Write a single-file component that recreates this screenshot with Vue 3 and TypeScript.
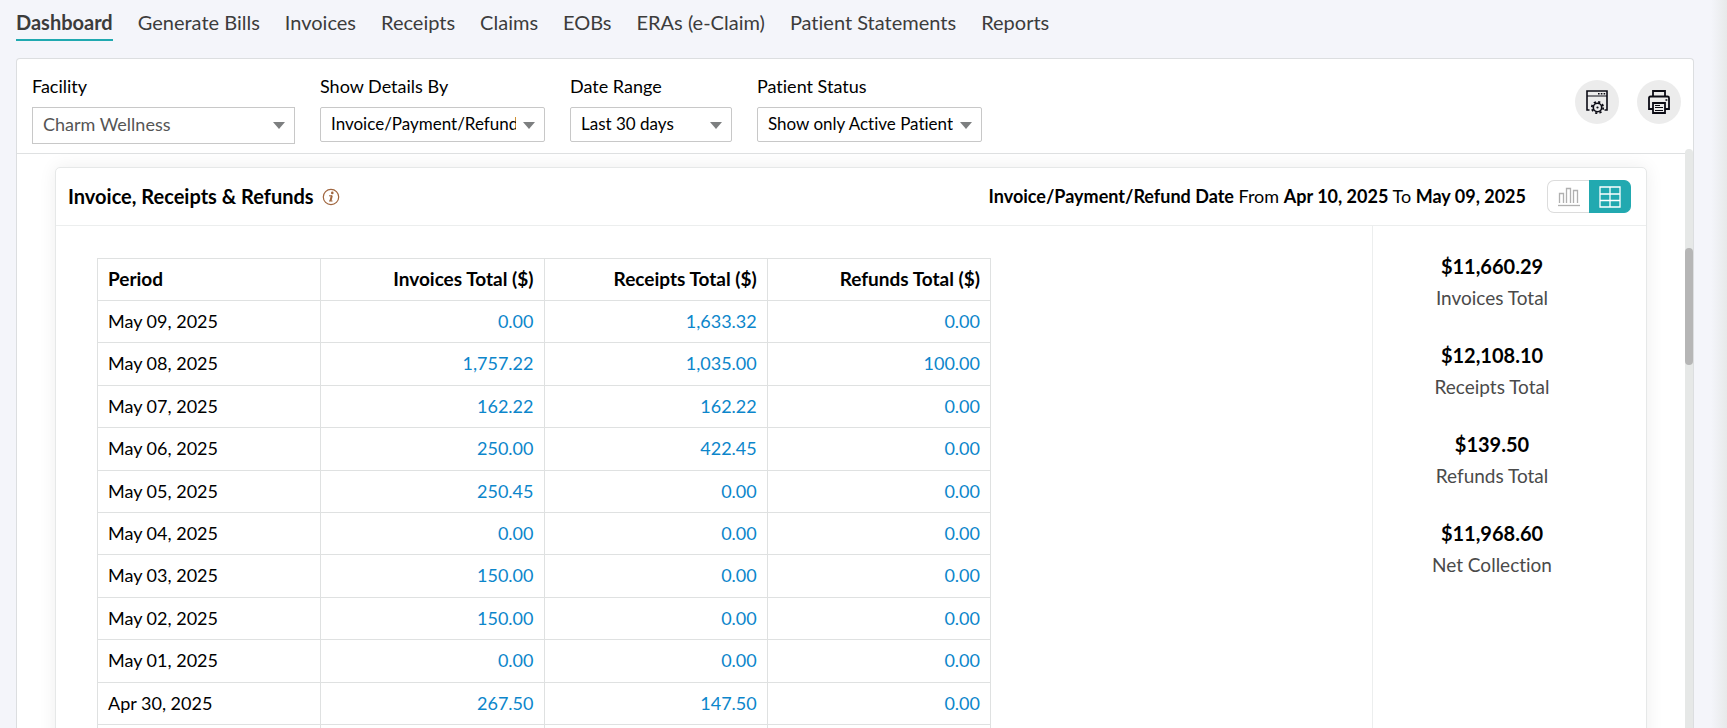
<script setup lang="ts">
import { ref } from 'vue'

interface Filter {
  id: string
  label: string
  options: string[]
  size: string
}

interface Row {
  period: string
  invoices: string
  receipts: string
  refunds: string
}

const tabs = [
  'Dashboard', 'Generate Bills', 'Invoices', 'Receipts', 'Claims',
  'EOBs', 'ERAs (e-Claim)', 'Patient Statements', 'Reports',
]
const activeTab = ref('Dashboard')

const filters: Filter[] = [
  { id: 'facility', label: 'Facility', options: ['Charm Wellness'], size: 'large' },
  { id: 'details', label: 'Show Details By', options: ['Invoice/Payment/Refund Date'], size: 'medium' },
  { id: 'range', label: 'Date Range', options: ['Last 30 days'], size: 'small' },
  { id: 'status', label: 'Patient Status', options: ['Show only Active Patients'], size: 'medium' },
]

const rows: Row[] = [
  { period: 'May 09, 2025', invoices: '0.00', receipts: '1,633.32', refunds: '0.00' },
  { period: 'May 08, 2025', invoices: '1,757.22', receipts: '1,035.00', refunds: '100.00' },
  { period: 'May 07, 2025', invoices: '162.22', receipts: '162.22', refunds: '0.00' },
  { period: 'May 06, 2025', invoices: '250.00', receipts: '422.45', refunds: '0.00' },
  { period: 'May 05, 2025', invoices: '250.45', receipts: '0.00', refunds: '0.00' },
  { period: 'May 04, 2025', invoices: '0.00', receipts: '0.00', refunds: '0.00' },
  { period: 'May 03, 2025', invoices: '150.00', receipts: '0.00', refunds: '0.00' },
  { period: 'May 02, 2025', invoices: '150.00', receipts: '0.00', refunds: '0.00' },
  { period: 'May 01, 2025', invoices: '0.00', receipts: '0.00', refunds: '0.00' },
  { period: 'Apr 30, 2025', invoices: '267.50', receipts: '147.50', refunds: '0.00' },
]

const totals = [
  { amount: '$11,660.29', label: 'Invoices Total' },
  { amount: '$12,108.10', label: 'Receipts Total' },
  { amount: '$139.50', label: 'Refunds Total' },
  { amount: '$11,968.60', label: 'Net Collection' },
]

const view = ref<'chart' | 'table'>('table')
</script>

<template>
  <div class="page">
    <nav class="tabs">
      <a
        v-for="tab in tabs"
        :key="tab"
        href="#"
        class="tab"
        :class="{ active: tab === activeTab }"
        @click.prevent="activeTab = tab"
      >{{ tab }}</a>
    </nav>

    <main class="panel">
      <header class="toolbar">
        <div v-for="f in filters" :key="f.id" class="field" :class="f.size">
          <label :for="f.id">{{ f.label }}</label>
          <div class="select-wrap">
            <select :id="f.id">
              <option v-for="o in f.options" :key="o">{{ o }}</option>
            </select>
            <svg class="caret" viewBox="0 0 12 7" aria-hidden="true"><path d="M0 0h12L6 7z" fill="#7d7f80" /></svg>
          </div>
        </div>
        <div class="actions">
          <button type="button" class="round" aria-label="Dashboard settings">
            <svg width="22" height="24" viewBox="0 0 22 24" fill="none" stroke="#0b0b14">
              <path d="M3.500 20H1V1h20v19h-2.500" stroke-width="1.600" />
              <path d="M1 6h20" stroke-width="1" />
              <path d="M12 3.800h1.600M14.800 3.800h1.600M17.600 3.800h1.600" stroke-width="1.600" />
              <circle cx="11.500" cy="17.500" r="4.200" stroke-width="1.600" />
              <circle cx="11.500" cy="17.500" r="5.700" stroke-dasharray="2.200 2.277" stroke-width="1.800" />
              <circle cx="11.500" cy="17.500" r="1.100" fill="#0b0b14" stroke="none" />
            </svg>
          </button>
          <button type="button" class="round" aria-label="Print">
            <svg width="22" height="24" viewBox="0 0 22 24" fill="none" stroke="#0b0b14">
              <path d="M5 7V1h12v6" stroke-width="1.800" />
              <path d="M5 19H1V8q0-1.500 1.500-1.500h17q1.500 0 1.500 1.500v11h-4" stroke-width="1.800" />
              <path d="M5 13h12v10H5z" stroke-width="1.800" />
              <path d="M7 15.500h5M7 17.500h8M7 20.500h8" stroke-width="1" />
              <path d="M17.500 10h1.800" stroke-width="1.600" />
            </svg>
          </button>
        </div>
      </header>

      <div class="scroller">
        <section class="card">
          <header class="card-head">
            <h2>Invoice, Receipts &amp; Refunds</h2>
            <button type="button" class="info" aria-label="About this report">
              <svg width="18" height="18" viewBox="0 0 18 18">
                <circle cx="9" cy="9" r="7.700" fill="none" stroke="#a0663f" stroke-width="1.200" />
                <circle cx="10.300" cy="4.900" r="1.300" fill="#a0663f" />
                <path d="M9.800 7.400L8.500 13" fill="none" stroke="#a0663f" stroke-width="2" />
                <path d="M7 7.800h3M7 13h3.500" fill="none" stroke="#a0663f" />
              </svg>
            </button>
            <p class="range"><b>Invoice/Payment/Refund Date</b> From <b>Apr 10, 2025</b> To <b>May 09, 2025</b></p>
            <div class="toggle">
              <button type="button" :class="{ on: view === 'chart' }" aria-label="Chart view" @click="view = 'chart'">
                <svg width="22" height="20" viewBox="0 0 22 20" fill="none" stroke="currentColor" stroke-width="1.300">
                  <path d="M1.500 16V6.500h4V16M8.500 16V1.500h4V16M15.500 16V3.500h4V16" />
                  <path d="M0 18.500h22" />
                </svg>
              </button>
              <button type="button" :class="{ on: view === 'table' }" aria-label="Table view" @click="view = 'table'">
                <svg width="22" height="22" viewBox="0 0 22 22" fill="none" stroke="currentColor" stroke-width="1.300">
                  <path d="M1 1h20v20H1zM1 8h20M1 14.500h20M11 1v20" />
                </svg>
              </button>
            </div>
          </header>

          <div class="card-body">
            <div class="table-area">
              <table>
                <thead>
                  <tr>
                    <th scope="col">Period</th>
                    <th scope="col">Invoices Total ($)</th>
                    <th scope="col">Receipts Total ($)</th>
                    <th scope="col">Refunds Total ($)</th>
                  </tr>
                </thead>
                <tbody>
                  <tr v-for="r in rows" :key="r.period">
                    <td>{{ r.period }}</td>
                    <td><a href="#">{{ r.invoices }}</a></td>
                    <td><a href="#">{{ r.receipts }}</a></td>
                    <td><a href="#">{{ r.refunds }}</a></td>
                  </tr>
                  <tr aria-hidden="true"><td></td><td></td><td></td><td></td></tr>
                </tbody>
              </table>
            </div>
            <dl class="totals">
              <div v-for="t in totals" :key="t.label">
                <dt>{{ t.label }}</dt>
                <dd>{{ t.amount }}</dd>
              </div>
            </dl>
          </div>
        </section>
        <div class="track"><div class="thumb"></div></div>
      </div>
    </main>
  </div>
</template>

<style>
html, body { margin: 0; }
</style>

<style scoped>
* { box-sizing: border-box; }
.page {
  height: 100vh;
  overflow: hidden;
  display: flex;
  flex-direction: column;
  padding: 0 33px 0 16px;
  background: linear-gradient(to left, #e7e9ea 0, #f4f5fa 16px);
  font-family: Lato, "Liberation Sans", sans-serif;
  font-size: 18px;
  font-variant-ligatures: none;
  color: #000;
}
button, select { font: inherit; font-variant-ligatures: none; margin: 0; }
.tabs { display: flex; gap: 25px; height: 58px; flex: none; align-items: flex-start; padding-top: 7px; }
.tab {
  color: #3c3c3c;
  font-size: 20px;
  line-height: 30px;
  padding-bottom: 2px;
  text-decoration: none;
  white-space: nowrap;
  border-bottom: 2px solid transparent;
}
.tab.active { font-weight: 700; border-color: #20a9b0; }
.panel {
  flex: 1;
  min-height: 0;
  display: flex;
  flex-direction: column;
  background: #fff;
  border: 1px solid #dcdee0;
  border-bottom: 0;
  border-radius: 4px 4px 0 0;
}
.toolbar {
  display: flex;
  align-items: flex-start;
  gap: 25px;
  height: 95px;
  flex: none;
  padding: 16px 12px 0 15px;
  border-bottom: 1px solid #dfe1e2;
}
.field label { display: block; line-height: 22px; margin-bottom: 10px; white-space: nowrap; }
.large { width: 263px; }
.medium { width: 225px; }
.small { width: 162px; }
.select-wrap { position: relative; }
select {
  appearance: none;
  display: block;
  width: 100%;
  height: 35px;
  padding: 0 28px 2px 10px;
  border: 1px solid #c8c8c8;
  border-radius: 2px;
  background: #fff;
  font-size: 17px;
  color: #000;
}
.large select { height: 37px; padding-bottom: 4px; border-radius: 0; font-size: 18px; color: #555; }
.caret { position: absolute; right: 10px; top: 15px; width: 12px; height: 7px; pointer-events: none; }
.actions { margin-left: auto; display: flex; gap: 18px; padding-top: 5px; }
.round {
  width: 44px;
  height: 44px;
  padding: 0;
  border: 0;
  border-radius: 50%;
  background: #ececec;
  display: grid;
  place-items: center;
}
.scroller {
  position: relative;
  flex: 1;
  min-height: 0;
  margin-top: -5px;
  overflow: hidden;
  padding: 18px 46px 0 38px;
}
.card {
  border: 1px solid #e6e8e8;
  border-radius: 5px;
  box-shadow: 0 0 18px rgba(0, 0, 0, 0.07);
  background: #fff;
  min-height: 100vh;
  display: flex;
  flex-direction: column;
}
.card-head {
  display: flex;
  align-items: center;
  height: 58px;
  padding: 0 15px 0 12px;
  border-bottom: 1px solid #eceeee;
}
h2, .range { margin: 0; padding-bottom: 2px; line-height: 24px; white-space: nowrap; }
h2 { font-size: 20px; font-weight: 700; }
.info { display: grid; margin-left: 8px; padding: 0; border: 0; background: none; }
.range { margin: 0 21px 0 auto; }
.toggle { display: flex; height: 33px; }
.toggle button {
  display: grid;
  place-items: center;
  width: 42px;
  padding: 0;
  border: 1px solid #dcdcdc;
  background: #fff;
  color: #b0b0b0;
}
.toggle button:first-child { border-radius: 7px 0 0 7px; border-right: 0; }
.toggle button:last-child { border-radius: 0 7px 7px 0; border-left: 0; }
.toggle .on { background: #22a9b0; border-color: #22a9b0; color: #fff; }
.card-body { flex: 1; display: flex; }
.table-area { flex: 1; padding: 32px 41px; }
table { width: 894px; max-width: 100%; table-layout: fixed; border-collapse: collapse; }
th, td {
  height: 42px;
  padding: 9px 10px;
  border: 1px solid #dfe1e1;
  line-height: 1.3;
  text-align: right;
}
th { padding: 8px 10px; font-size: 19px; }
th:first-child, td:first-child { text-align: left; }
td a { color: #0c86cb; text-decoration: none; }
.totals {
  width: 274px;
  margin: 0;
  padding: 24px 35px 0 0;
  border-left: 1px solid #eceeee;
  text-align: center;
}
.totals div { display: flex; flex-direction: column-reverse; margin-bottom: 25px; }
.totals dt { color: #4a4a4a; font-size: 19px; line-height: 32px; }
.totals dd { margin: 0; font-size: 20px; font-weight: 700; line-height: 32px; }
.track { position: absolute; right: 0; top: 0; bottom: 0; width: 8px; border-radius: 4px 4px 0 0; background: #e6e8e7; padding-top: 99px; }
.thumb { height: 117px; border-radius: 4px; background: #b6b6b6; }
</style>
